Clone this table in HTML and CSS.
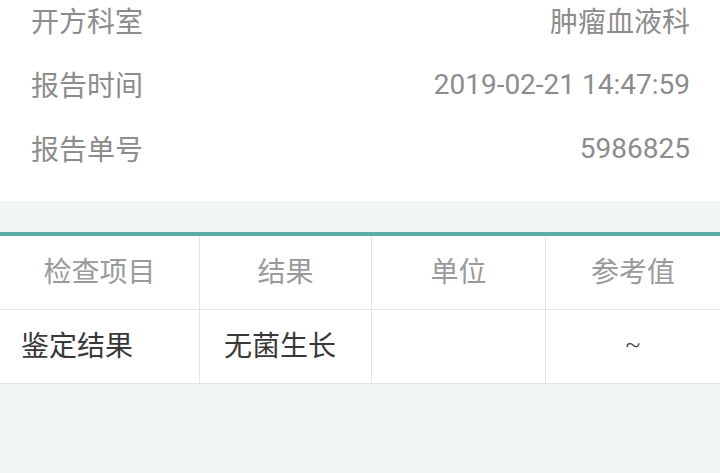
FILE: index.html
```html
<!DOCTYPE html>
<html lang="zh">
<head>
<meta charset="utf-8">
<link rel="stylesheet" href="styles.css">
</head>
<body>
<div class="page">
  <section class="info">
    <div class="row"><span class="label">开方科室</span><span class="value">肿瘤血液科</span></div>
    <div class="row"><span class="label">报告时间</span><span class="value">2019-02-21 14:47:59</span></div>
    <div class="row"><span class="label">报告单号</span><span class="value">5986825</span></div>
  </section>
  <div class="spacer"></div>
  <section class="table">
    <div class="cell head">检查项目</div>
    <div class="cell head">结果</div>
    <div class="cell head">单位</div>
    <div class="cell head last">参考值</div>
    <div class="cell body c1">鉴定结果</div>
    <div class="cell body c2">无菌生长</div>
    <div class="cell body"></div>
    <div class="cell body center last"><span class="tilde">~</span></div>
  </section>
</div>
</body>
</html>
```

FILE: styles.css
```css
html, body {
  margin: 0;
  padding: 0;
  background: #f2f5f6;
}
body {
  width: 720px;
  height: 473px;
  overflow: hidden;
  font-family: Roboto, "Noto Sans CJK SC", sans-serif;
}
.page {
  display: flex;
  flex-direction: column;
}
.info {
  background: #fff;
  margin-top: -12px;
  padding: 0 30px 21px 31px;
}
.row {
  height: 64px;
  display: flex;
  align-items: center;
  justify-content: space-between;
  font-size: 28px;
  color: #8c8c8c;
}
.spacer {
  height: 31px;
  border-bottom: 4px solid #5aaea3;
}
.table {
  display: grid;
  grid-template-columns: 200px 172px 174px 1fr;
  background: #fff;
}
.cell {
  border-right: 1px solid #e3e3e3;
  border-bottom: 1px solid #e3e3e3;
  display: flex;
  align-items: center;
  font-size: 28px;
  height: 74px;
  padding-bottom: 5px;
  box-sizing: border-box;
}
.cell.last {
  border-right: none;
}
.head {
  justify-content: center;
  color: #9a9a9a;
}
.body {
  color: #383838;
}
.c1 {
  padding-left: 21px;
}
.c2 {
  padding-left: 24px;
}
.center {
  justify-content: center;
}
.tilde {
  font-size: 24px;
  font-weight: 300;
}
```
